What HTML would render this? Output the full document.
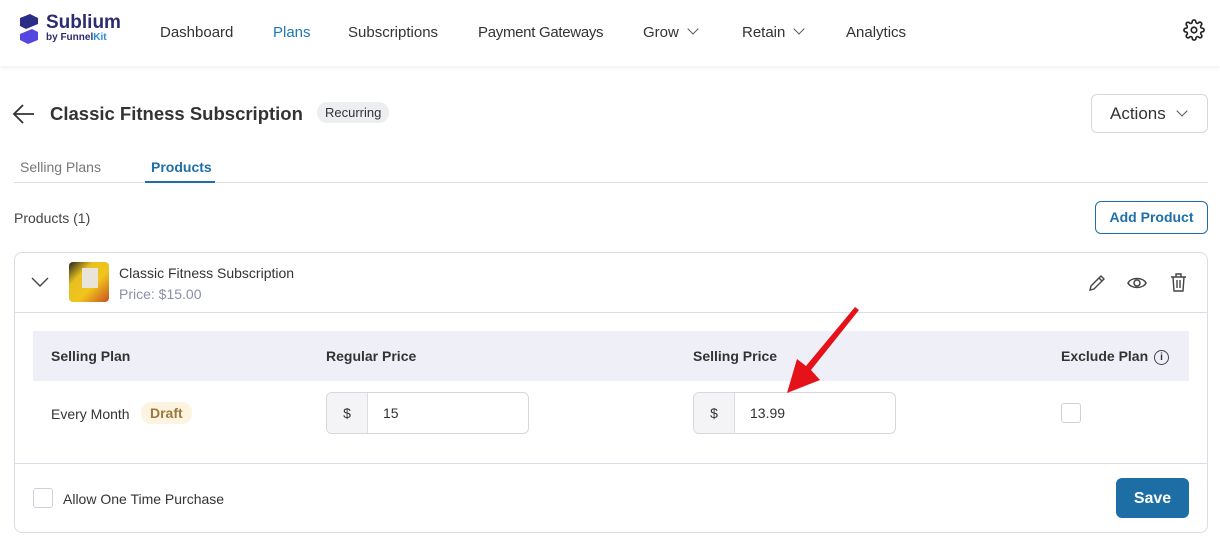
<!DOCTYPE html>
<html><head><style>
*{box-sizing:border-box;margin:0;padding:0}
body{width:1220px;height:546px;background:#fff;font-family:"Liberation Sans",sans-serif;color:#353030;position:relative;overflow:hidden;font-size:14px}
.a{position:absolute}
.nav{top:0;left:0;width:1220px;height:66px;background:#fff;box-shadow:0 2px 4px rgba(0,0,0,.06)}
.nav span{position:absolute;top:24px;font-size:15px;color:#333;white-space:nowrap}
.chev{display:inline-block;width:8px;height:8px;border-right:1.3px solid #555;border-bottom:1.3px solid #555;transform:rotate(45deg);margin-left:10px;position:relative;top:-4px}
.btn{border:1px solid #d7d7e0;border-radius:6px}
.th{font-size:14px;font-weight:bold;color:#333;top:348px}
</style></head><body>
<div class="a nav">
<svg class="a" style="left:16px;top:14px" width="26" height="30" viewBox="0 0 26 30"><path d="M4 4 L14 0 L22 4 L22 10 L10 15 L4 12Z" fill="#2b2d86"/><path d="M4 20 L16 15 L22 18 L22 26 L12 30 L4 26Z" fill="#5546e0"/></svg>
<div class="a" style="left:46px;top:12px;font-size:19px;font-weight:bold;color:#2b2d6e;white-space:nowrap">Sublium</div>
<div class="a" style="left:46px;top:32px;font-size:10px;font-weight:bold;color:#2b2d6e;white-space:nowrap">by Funnel<b style="color:#2a8bd8">Kit</b></div>
<span style="left:160px">Dashboard</span>
<span style="left:273px;color:#1e78b4">Plans</span>
<span style="left:348px">Subscriptions</span>
<span style="left:478px;letter-spacing:-0.3px">Payment Gateways</span>
<span style="left:643px">Grow<i class="chev"></i></span>
<span style="left:742px">Retain<i class="chev"></i></span>
<span style="left:846px">Analytics</span>
<svg class="a" style="left:1183px;top:19px" width="22" height="22" viewBox="0 0 24 24" fill="none" stroke="#222" stroke-width="1.8"><circle cx="12" cy="12" r="3"/><path d="M19.4 15a1.7 1.7 0 0 0 .3 1.8l.1.1a2 2 0 1 1-2.8 2.8l-.1-.1a1.7 1.7 0 0 0-1.8-.3 1.7 1.7 0 0 0-1 1.5V21a2 2 0 1 1-4 0v-.1a1.7 1.7 0 0 0-1.1-1.5 1.7 1.7 0 0 0-1.8.3l-.1.1a2 2 0 1 1-2.8-2.8l.1-.1a1.7 1.7 0 0 0 .3-1.8 1.7 1.7 0 0 0-1.5-1H3a2 2 0 1 1 0-4h.1a1.7 1.7 0 0 0 1.5-1.1 1.7 1.7 0 0 0-.3-1.8l-.1-.1a2 2 0 1 1 2.8-2.8l.1.1a1.7 1.7 0 0 0 1.8.3H9a1.7 1.7 0 0 0 1-1.5V3a2 2 0 1 1 4 0v.1a1.7 1.7 0 0 0 1 1.5 1.7 1.7 0 0 0 1.8-.3l.1-.1a2 2 0 1 1 2.8 2.8l-.1.1a1.7 1.7 0 0 0-.3 1.8V9a1.7 1.7 0 0 0 1.5 1H21a2 2 0 1 1 0 4h-.1a1.7 1.7 0 0 0-1.5 1z"/></svg>
</div>
<svg class="a" style="left:12px;top:103px" width="24" height="22" viewBox="0 0 24 22" fill="none" stroke="#333" stroke-width="1.8"><path d="M22 11H2M11 2L2 11l9 9"/></svg>
<div class="a" style="left:50px;top:103px;font-size:18.5px;font-weight:bold;color:#333;white-space:nowrap">Classic Fitness Subscription</div>
<div class="a" style="left:317px;top:102px;background:#eceef2;border-radius:10px;padding:3px 8px;font-size:13px;color:#333">Recurring</div>
<div class="a btn" style="left:1091px;top:94px;width:117px;height:39px;font-size:17px;padding:9px 18px;color:#333;white-space:nowrap">Actions<i class="chev" style="margin-left:12px"></i></div>
<div class="a" style="left:20px;top:159px;font-size:14px;color:#777">Selling Plans</div>
<div class="a" style="left:151px;top:159px;font-size:14px;color:#1e6fa8;font-weight:bold">Products</div>
<div class="a" style="left:14px;top:182px;width:1194px;height:1px;background:#dcdce4"></div>
<div class="a" style="left:145px;top:181px;width:70px;height:2px;background:#1e6fa8"></div>
<div class="a" style="left:14px;top:210px;font-size:14px;color:#444">Products (1)</div>
<div class="a" style="left:1095px;top:201px;width:113px;height:33px;border:1px solid #1e6fa8;border-radius:6px;color:#1e6fa8;font-size:14px;font-weight:bold;text-align:center;line-height:31px">Add Product</div>
<div class="a" style="left:14px;top:252px;width:1194px;height:281px;border:1px solid #dcdce6;border-radius:8px"></div>
<div class="a" style="left:14px;top:312px;width:1194px;height:1px;background:#dcdce6"></div>
<div class="a" style="left:14px;top:463px;width:1194px;height:1px;background:#dcdce6"></div>
<svg class="a" style="left:31px;top:277px" width="18" height="10" viewBox="0 0 18 10" fill="none" stroke="#444" stroke-width="1.4"><path d="M1 1l8 8 8-8"/></svg>
<div class="a" style="left:69px;top:262px;width:40px;height:40px;border-radius:4px;background:linear-gradient(135deg,#222 0,#e6c020 30%,#f0c51c 60%,#c85020 100%)"><div style="position:absolute;left:13px;top:6px;width:16px;height:20px;background:#e8e4dc"></div></div>
<div class="a" style="left:119px;top:265px;font-size:14px;color:#333">Classic Fitness Subscription</div>
<div class="a" style="left:119px;top:286px;font-size:14px;color:#8a8fa8">Price: $15.00</div>
<svg class="a" style="left:1088px;top:274px" width="18" height="18" viewBox="0 0 18 18" fill="none" stroke="#444" stroke-width="1.4"><path d="M2 16l1-4L13 2l3 3L6 15z M11 4l3 3"/></svg>
<svg class="a" style="left:1127px;top:276px" width="20" height="14" viewBox="0 0 20 14" fill="none" stroke="#444" stroke-width="1.5"><path d="M1 7c3-6 15-6 18 0c-3 6-15 6-18 0z"/><circle cx="10" cy="7" r="3"/></svg>
<svg class="a" style="left:1170px;top:273px" width="17" height="19" viewBox="0 0 17 19" fill="none" stroke="#444" stroke-width="1.4"><path d="M1 4h15M6 4V1h5v3M3 4l1 14h9l1-14M7 7v8M10 7v8"/></svg>
<div class="a" style="left:33px;top:331px;width:1156px;height:50px;background:#eff0f7"></div>
<div class="a th" style="left:51px">Selling Plan</div>
<div class="a th" style="left:326px">Regular Price</div>
<div class="a th" style="left:693px">Selling Price</div>
<div class="a th" style="left:1061px">Exclude Plan</div>
<div class="a" style="left:1154px;top:350px;width:15px;height:15px;border:1.3px solid #444;border-radius:50%;font-size:10px;text-align:center;line-height:13px;font-weight:bold">i</div>
<div class="a" style="left:51px;top:406px;font-size:14px;color:#333">Every Month</div>
<div class="a" style="left:141px;top:402px;background:#fdf3e1;border-radius:10px;padding:3px 9px;font-size:14px;font-weight:bold;color:#9a7a3c">Draft</div>
<div class="a btn" style="left:326px;top:392px;width:203px;height:42px;overflow:hidden"><div style="width:41px;height:40px;background:#f4f4f6;border-right:1px solid #ddd;text-align:center;line-height:40px">$</div><div style="position:absolute;left:56px;top:12px">15</div></div>
<div class="a btn" style="left:693px;top:392px;width:203px;height:42px;overflow:hidden"><div style="width:41px;height:40px;background:#f4f4f6;border-right:1px solid #ddd;text-align:center;line-height:40px">$</div><div style="position:absolute;left:56px;top:12px">13.99</div></div>
<div class="a" style="left:1061px;top:403px;width:20px;height:20px;border:1.5px solid #d0d0dc;border-radius:3px"></div>
<div class="a" style="left:33px;top:488px;width:20px;height:20px;border:1.5px solid #d0d0dc;border-radius:3px"></div>
<div class="a" style="left:63px;top:491px;font-size:14px;color:#333">Allow One Time Purchase</div>
<div class="a" style="left:1116px;top:478px;width:73px;height:40px;background:#1c6ea4;border-radius:6px;color:#fff;font-weight:bold;font-size:16px;text-align:center;line-height:42px">Save</div>
<svg class="a" style="left:0;top:0" width="1220" height="546"><path d="M859 310 L811 370 L820 380 L787 393 L797 359 L806 366 L855 307 Z" fill="#e5121a"/></svg>
</body></html>
